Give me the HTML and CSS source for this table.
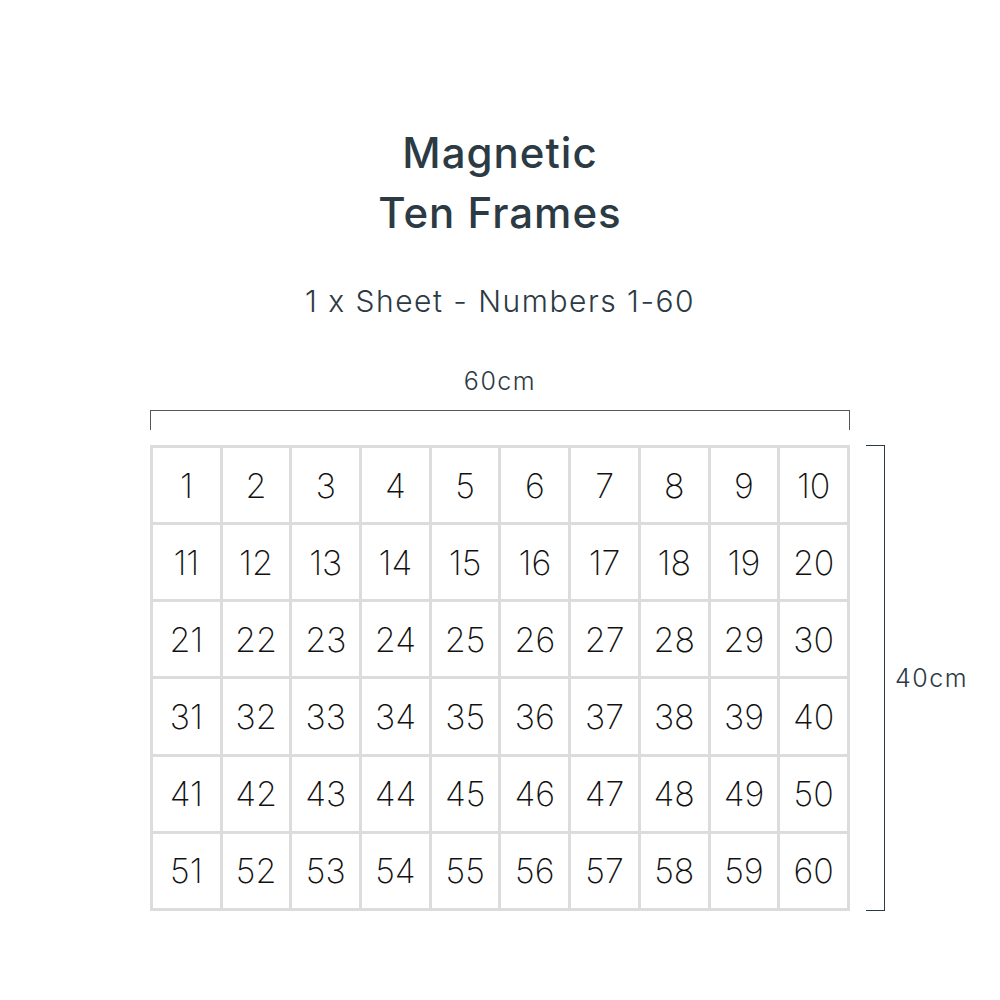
FILE: index.html
```html
<!DOCTYPE html>
<html>
<head>
<meta charset="utf-8">
<link rel="stylesheet" href="styles.css">
</head>
<body>
<div class="page">
  <h1 class="title">Magnetic<br>Ten Frames</h1>
  <p class="subtitle">1 x Sheet - Numbers 1-60</p>
  <div class="figure">
    <div class="width-label">60cm</div>
    <div class="spacer"></div>
    <div class="spacer"></div>
    <div class="top-bracket"></div>
    <div class="spacer"></div>
    <div class="spacer"></div>
    <div class="sheet" id="sheet"></div>
    <div class="side-bracket"></div>
    <div class="height-label">40cm</div>
  </div>
</div>
<script>
  var s = document.getElementById('sheet');
  for (var i = 1; i <= 60; i++) {
    var c = document.createElement('div');
    c.className = 'cell';
    c.textContent = i;
    s.appendChild(c);
  }
</script>
</body>
</html>
```
FILE: styles.css
```css
html, body {
  margin: 0;
  padding: 0;
  background: #ffffff;
}
.page {
  width: 1000px;
  height: 1000px;
  display: flex;
  flex-direction: column;
  align-items: center;
  font-family: "Inter", "Lato", sans-serif;
  color: #2c3a44;
}
.title {
  margin: 123px 0 0 0;
  font-size: 42px;
  line-height: 60px;
  font-weight: 500;
  text-align: center;
  letter-spacing: 1px;
}
.subtitle {
  margin: 38px 0 0 0;
  font-size: 30px;
  line-height: 40px;
  font-weight: 300;
  letter-spacing: 1.5px;
}
.figure {
  margin-top: 45px;
  align-self: flex-start;
  margin-left: 150px;
  display: grid;
  grid-template-columns: 700px 35px auto;
  grid-template-rows: auto auto auto;
}
.width-label {
  text-align: center;
  font-size: 25px;
  line-height: 30px;
  font-weight: 300;
  letter-spacing: 1.5px;
  color: #2c3a44;
}
.top-bracket {
  margin-top: 14px;
  height: 20px;
  border: 1.5px solid #555;
  border-bottom: none;
  box-sizing: border-box;
}
.sheet {
  margin-top: 15px;
  width: 700px;
  height: 466px;
  box-sizing: border-box;
  padding: 3px;
  background: #dcdcdc;
  display: grid;
  grid-template-columns: repeat(10, 1fr);
  grid-template-rows: repeat(6, 1fr);
  gap: 3px;
}
.cell {
  background: #fff;
  display: flex;
  align-items: center;
  justify-content: center;
  font-family: "Inter", "Lato", sans-serif;
  font-weight: 200;
  font-size: 34px;
  color: #111;
}
.side-bracket {
  margin-top: 15px;
  margin-left: 16px;
  width: 19px;
  height: 466px;
  box-sizing: border-box;
  border: 1.5px solid #2c3a44;
  border-left: none;
}
.height-label {
  margin-top: 15px;
  margin-left: 10px;
  height: 466px;
  display: flex;
  align-items: center;
  font-size: 25px;
  font-weight: 300;
  letter-spacing: 1.5px;
  color: #2c3a44;
}
```
